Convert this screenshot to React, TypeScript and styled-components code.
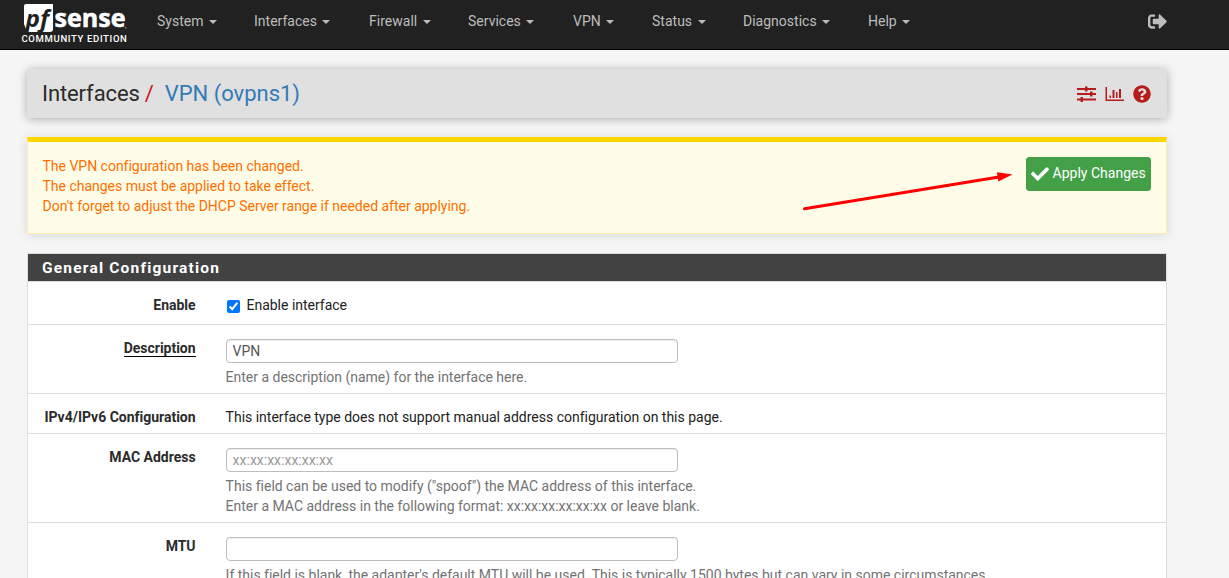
import React from "react";
import styled, { createGlobalStyle } from "styled-components";
import { FaCheck, FaQuestionCircle, FaSignOutAlt } from "react-icons/fa";

const GlobalStyle = createGlobalStyle`
  *, *::before, *::after { box-sizing: border-box; }
  html { overflow: hidden; height: 100%; }
  body {
    margin: 0;
    height: 100%;
    overflow: hidden;
    background: #f5f5f5;
    color: #212121;
    font: 14px/20px Roboto, "Liberation Sans", sans-serif;
    letter-spacing: -0.01px;
  }
`;

const Navbar = styled.nav`
  display: flex;
  height: 50px;
  padding-left: 20px;
  background: #212121;
  border-bottom: 1px solid #000;
`;

const Brand = styled.a`
  display: flex;
  flex-direction: column;
  width: 118px;
  padding-top: 3px;
`;

const Edition = styled.span`
  margin: 1px 0 0 1.5px;
  font-size: 9.5px;
  line-height: 12px;
  font-weight: 500;
  letter-spacing: 0.66px;
  color: #fff;
  white-space: nowrap;
`;

const Menu = styled.div`
  display: flex;
`;

const MenuItem = styled.a<{ $width: number }>`
  display: flex;
  align-items: center;
  width: ${(p) => p.$width}px;
  height: 42px;
  padding-left: 19px;
  color: #bdbdbd;
  letter-spacing: 0.01px;
  white-space: nowrap;
`;

const Caret = styled.span`
  margin-left: 5.5px;
  margin-top: 2px;
  border-top: 4px solid #bdbdbd;
  border-left: 4px solid transparent;
  border-right: 4px solid transparent;
`;

const Logout = styled.a`
  display: flex;
  align-items: center;
  height: 42px;
  margin-left: auto;
  padding-right: 62px;
  color: #bdbdbd;
  font-size: 19px;
`;

const Container = styled.main`
  width: 1140px;
  margin: 19px 0 0 27px;
`;

const TitleBar = styled.header`
  display: flex;
  align-items: center;
  justify-content: space-between;
  height: 49px;
  padding: 0 16px 0 15px;
  background: #e0e0e0;
  border-radius: 4px;
  box-shadow: 0 1px 10px rgba(0, 0, 0, 0.3);
`;

const Breadcrumb = styled.h1`
  display: flex;
  margin: 0;
  font-size: 22px;
  line-height: 24px;
  font-weight: 400;
  letter-spacing: -0.1px;
  color: #2b2b2b;
`;

const Slash = styled.span`
  margin: 0 11px 0 5px;
  color: #c9151b;
`;

const Crumb = styled.a`
  color: #337ab7;
  letter-spacing: -0.02px;
`;

const TitleIcons = styled.div`
  display: flex;
  align-items: center;
  gap: 9px;
  padding-top: 1px;
  color: #b71c1c;
  font-size: 18px;
`;

const Alert = styled.section`
  position: relative;
  display: flex;
  justify-content: space-between;
  height: 97px;
  margin-top: 19px;
  padding: 15px 15px 0 14px;
  background: #fffde7;
  border: 1px solid #ffecb3;
  border-top: 5px solid #ffd600;
  box-shadow: 0 1px 10px rgba(0, 0, 0, 0.12);
  color: #ff6f00;
`;

const Message = styled.p`
  margin: -1px 0 0 0.5px;
`;

const Arrow = styled.svg`
  position: absolute;
  left: 772px;
  top: 25px;
`;

const ApplyButton = styled.button`
  display: flex;
  align-items: center;
  gap: 4px;
  width: 125px;
  height: 34px;
  padding: 0 3px 2px 3.5px;
  background: #43a047;
  border: 1px solid #43a047;
  border-radius: 3px;
  color: #fff;
  font: inherit;
  letter-spacing: 0.02px;
  white-space: nowrap;

  svg { flex: none; margin-top: 2px; }
`;

const Panel = styled.section`
  margin-top: 19px;
  background: #fff;
  border: 1px solid #ddd;
`;

const PanelHeading = styled.h2`
  margin: 0;
  height: 27px;
  padding-left: 14px;
  background: #424242;
  color: #fff;
  font-size: 15.5px;
  line-height: 28px;
  font-weight: 700;
  letter-spacing: 1.2px;
`;

const Row = styled.div<{ $height: number }>`
  display: grid;
  grid-template-columns: 167.6px 1fr;
  column-gap: 30.4px;
  align-content: start;
  height: ${(p) => p.$height}px;
  padding-top: 13px;
  border-top: 1px solid #ddd;
`;

const Label = styled.label`
  justify-self: end;
  font-weight: 700;
  color: #2b2b2b;
  white-space: nowrap;
`;

const Required = styled.span`
  display: block;
  height: 19px;
  border-bottom: 1px solid #000;
`;

const Field = styled.div`
  margin-left: -0.4px;
  white-space: nowrap;
`;

const CheckLine = styled.label`
  display: flex;
  align-items: center;
  gap: 6.5px;
`;

const Checkbox = styled.input`
  width: 13px;
  height: 13px;
  margin: 2px 0 0 1px;
  accent-color: #0075ff;
`;

const TextInput = styled.input`
  display: block;
  width: 452px;
  height: 24px;
  margin: 1px 0 4px;
  padding: 0 6px;
  border: 1px solid #bdbdbd;
  border-radius: 4px;
  box-shadow: inset 0 1px 1px rgba(0, 0, 0, 0.075);
  color: #555;
  font: inherit;

  &::placeholder { color: #999; opacity: 1; }
`;

const Help = styled.div`
  color: #737373;
`;

const menu: [string, number][] = [
  ["System", 97],
  ["Interfaces", 115],
  ["Firewall", 99],
  ["Services", 105],
  ["VPN", 79],
  ["Status", 91],
  ["Diagnostics", 125],
  ["Help", 80],
];

const Logo = () => (
  <svg width="108" height="29" viewBox="0 0 108 29" overflow="visible">
    <path d="M4 3Q4 1 6 1H33V26Q33 29 30 29H7L4 21Z" fill="#fff" />
    <text x="5.500" y="23.500" fontFamily="Open Sans" fontSize="24" fontWeight="700" fontStyle="italic" fill="#212121" textLength="23.500" lengthAdjust="spacingAndGlyphs">pf</text>
    <text x="34.500" y="24.200" fontFamily="Open Sans" fontSize="24.500" fontWeight="700" fill="#fff" stroke="#fff" strokeWidth="0.500" textLength="71" lengthAdjust="spacingAndGlyphs">sense</text>
    <rect x="105" y="24" width="1.500" height="1.500" fill="#888" />
  </svg>
);

const SlidersIcon = () => (
  <svg width="19" height="16" viewBox="0 0 19 16" fill="currentColor">
    <path d="M0 2h19v2H0zM0 7h19v2H0zM0 12.5h19v2H0z" />
    <path d="M8 0.500h2.500v5H8zM13 5.500h2.500v5H13zM3.500 11H6v5H3.500z" />
  </svg>
);

const ChartIcon = () => (
  <svg width="19" height="16" viewBox="0 0 19 16" fill="currentColor">
    <path d="M0.500 1H2v12.500H19V15H0.500zM4.500 9.500H6V12H4.500zM7.500 4H9.500V12H7.500zM11 6h1.500v6H11zM14 3h2v9h-2z" />
  </svg>
);

export default function App() {
  return (
    <>
      <GlobalStyle />
      <Navbar>
        <Brand>
          <Logo />
          <Edition>COMMUNITY EDITION</Edition>
        </Brand>
        <Menu>
          {menu.map(([name, width]) => (
            <MenuItem key={name} $width={width}>
              {name}
              <Caret />
            </MenuItem>
          ))}
        </Menu>
        <Logout>
          <FaSignOutAlt />
        </Logout>
      </Navbar>
      <Container>
        <TitleBar>
          <Breadcrumb>
            Interfaces<Slash>/</Slash>
            <Crumb>VPN (ovpns1)</Crumb>
          </Breadcrumb>
          <TitleIcons>
            <SlidersIcon />
            <ChartIcon />
            <FaQuestionCircle />
          </TitleIcons>
        </TitleBar>
        <Alert>
          <Message>
            The VPN configuration has been changed.
            <br />
            The changes must be applied to take effect.
            <br />
            Don't forget to adjust the DHCP Server range if needed after applying.
          </Message>
          <ApplyButton>
            <FaCheck size={18} />
            Apply Changes
          </ApplyButton>
          <Arrow width="216" height="48" viewBox="800 167 216 48">
            <path d="M804.500 208.700L999 177" stroke="#f00" strokeWidth="3" strokeLinecap="round" />
            <path d="M997 172.300L1012.500 174.400L998.300 181.500Z" fill="#f00" />
          </Arrow>
        </Alert>
        <Panel>
          <PanelHeading>General Configuration</PanelHeading>
          <Row $height={43}>
            <Label>Enable</Label>
            <CheckLine>
              <Checkbox type="checkbox" defaultChecked />
              Enable interface
            </CheckLine>
          </Row>
          <Row $height={69}>
            <Label>
              <Required>Description</Required>
            </Label>
            <Field>
              <TextInput defaultValue="VPN" />
              <Help>Enter a description (name) for the interface here.</Help>
            </Field>
          </Row>
          <Row $height={40}>
            <Label>IPv4/IPv6 Configuration</Label>
            <Field>This interface type does not support manual address configuration on this page.</Field>
          </Row>
          <Row $height={89}>
            <Label>MAC Address</Label>
            <Field>
              <TextInput placeholder="xx:xx:xx:xx:xx:xx" />
              <Help>
                This field can be used to modify ("spoof") the MAC address of this interface.
                <br />
                Enter a MAC address in the following format: xx:xx:xx:xx:xx:xx or leave blank.
              </Help>
            </Field>
          </Row>
          <Row $height={89}>
            <Label>MTU</Label>
            <Field>
              <TextInput />
              <Help>
                If this field is blank, the adapter's default MTU will be used. This is typically 1500 bytes but can vary in some circumstances.
              </Help>
            </Field>
          </Row>
        </Panel>
      </Container>
    </>
  );
}
